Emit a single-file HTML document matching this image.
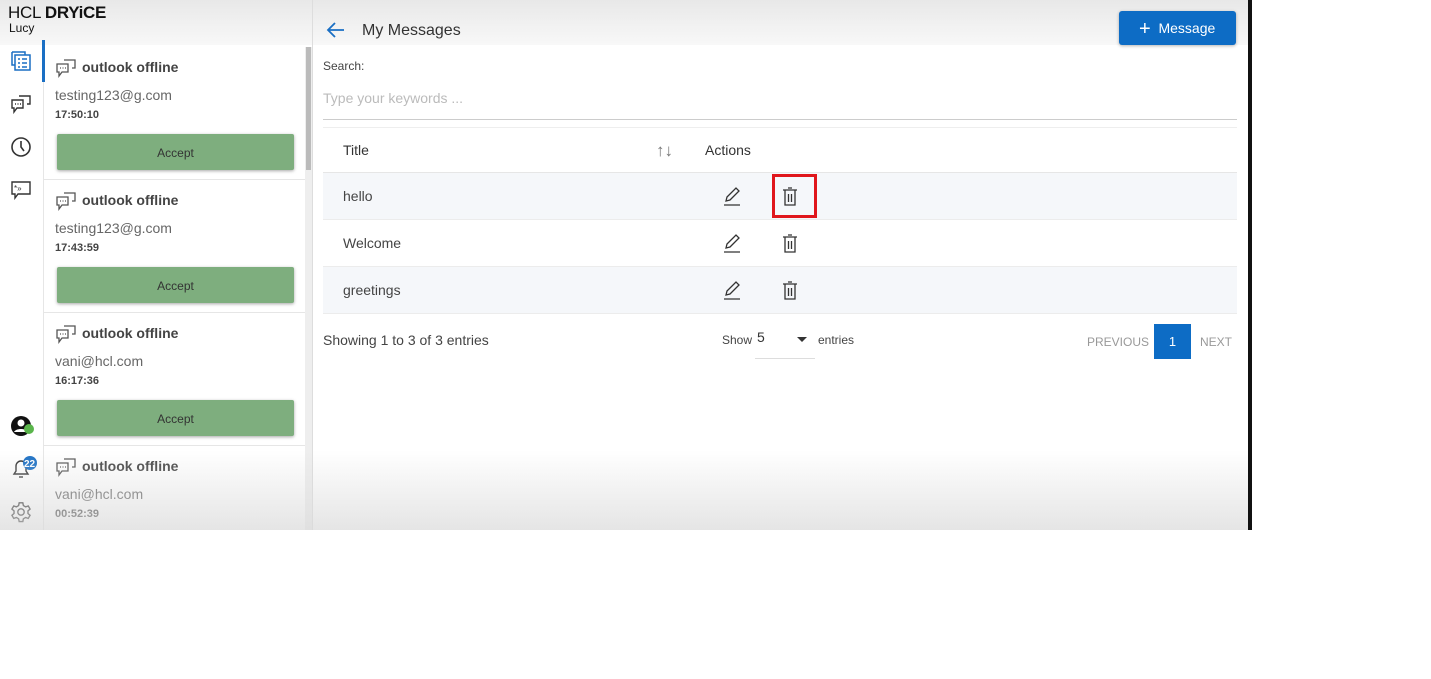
<!DOCTYPE html>
<html><head><style>
*{margin:0;padding:0;box-sizing:border-box}
body{width:1431px;height:679px;background:#fff;font-family:"Liberation Sans",sans-serif;position:relative;overflow:hidden;color:#333}
.abs{position:absolute}
.screen{position:absolute;left:0;top:0;width:1248px;height:530px;background:#fff;overflow:hidden}
.vline{position:absolute;left:1248px;top:0;width:4px;height:530px;background:#111}
.card{position:absolute;left:44px;width:261px;height:133px;border-bottom:1px solid #e6e6e6}
.card .t{position:absolute;left:38px;top:12px;font-size:14px;font-weight:bold;color:#444}
.card .e{position:absolute;left:11px;top:40px;font-size:14px;color:#666}
.card .tm{position:absolute;left:11px;top:62px;font-size:11px;font-weight:bold;color:#444}
.card .b{position:absolute;left:13px;top:87px;width:237px;height:36px;background:#7eae7e;box-shadow:0 1px 3px rgba(0,0,0,.35);font-size:12px;text-align:center;line-height:38px;color:#333;border-radius:2px}
.card svg{position:absolute;left:11px;top:10px}
.row{position:absolute;left:323px;width:914px;height:47px;border-bottom:1px solid #ececec;font-size:14px;color:#444}
.row span{position:absolute;left:20px;top:15px}
.row .ed{position:absolute;left:398px;top:12px}
.row .dl{position:absolute;left:456px;top:12px}
</style></head><body>
<div class="screen">
 <div class="abs" style="left:0;top:0;width:1248px;height:45px;background:linear-gradient(#e8e8e8,#f8f8f8)"></div>
 <div class="abs" style="left:8px;top:3px;font-size:17px;color:#111;letter-spacing:-0.3px">HCL <b>DRYiCE</b></div>
 <div class="abs" style="left:9px;top:21px;font-size:12px;color:#111">Lucy</div>
 <div class="abs" style="left:43px;top:40px;width:1px;height:490px;background:#e6e6e6"></div>
 <div class="abs" style="left:42px;top:40px;width:3px;height:42px;background:#1a6fc4"></div>
 <svg class="abs" style="left:10px;top:50px" width="22" height="22" viewBox="0 0 22 22" fill="none" stroke="#1a6fc4" stroke-width="1.5"><rect x="5" y="5" width="15" height="15"/><path d="M2 2h13v3M2 2v13h3M8 9h2M12 9h5M8 13h2M12 13h5M8 17h2M12 17h5"/></svg>
 <svg class="abs" style="left:10px;top:93px" width="22" height="22" viewBox="0 0 22 22" fill="none" stroke="#333" stroke-width="1.4"><path d="M2 7h11v8H7l-3 4v-4H2z"/><path d="M9 3h11v8h-3"/><path d="M5 11h1M7.5 11h1M10 11h1"/></svg>
 <svg class="abs" style="left:10px;top:136px" width="22" height="22" viewBox="0 0 22 22" fill="none" stroke="#333" stroke-width="1.6"><circle cx="11" cy="11" r="9"/><path d="M11 5v6l3 4"/></svg>
 <svg class="abs" style="left:10px;top:179px" width="22" height="22" viewBox="0 0 22 22" fill="none" stroke="#333" stroke-width="1.4"><path d="M2 3h18v12H8l-3 4v-4H2z"/><text x="4" y="12" font-size="8" fill="#333" stroke="none">*»</text></svg>
 <svg class="abs" style="left:10px;top:415px" width="26" height="22" viewBox="0 0 26 22"><circle cx="11" cy="11" r="10" fill="#111"/><circle cx="11" cy="8" r="3.5" fill="#fff"/><path d="M4 17c2-4 12-4 14 0" fill="#fff"/><circle cx="19" cy="14" r="5" fill="#5ab54b"/></svg>
 <svg class="abs" style="left:10px;top:455px" width="28" height="26" viewBox="0 0 28 26" fill="none" stroke="#333" stroke-width="1.4"><path d="M4 19h14l-2-3v-5a5 5 0 0 0-10 0v5z"/><path d="M9 22h4"/><circle cx="20" cy="8" r="7" fill="#1a6fc4" stroke="none"/><text x="14" y="12" font-size="10" font-weight="bold" fill="#fff" stroke="none" font-family="Liberation Sans">22</text></svg>
 <svg class="abs" style="left:10px;top:501px" width="22" height="22" viewBox="0 0 24 24" fill="none" stroke="#333" stroke-width="1.5"><circle cx="12" cy="12" r="3.5"/><path d="M10 2h4l.6 3 2.4 1.4 2.9-1 2 3.4-2.3 2v2.8l2.3 2-2 3.4-2.9-1-2.4 1.4-.6 3h-4l-.6-3-2.4-1.4-2.9 1-2-3.4 2.3-2v-2.8l-2.3-2 2-3.4 2.9 1L9.4 5z"/></svg>
 <div class="card" style="top:47px"><svg width="22" height="22" viewBox="0 0 22 22" fill="none" stroke="#555" stroke-width="1.3"><path d="M2 7h11v8H7l-3 4v-4H2z"/><path d="M9 3h11v8h-3"/><path d="M5 11h1M7.5 11h1M10 11h1"/></svg><div class="t">outlook offline</div><div class="e">testing123@g.com</div><div class="tm">17:50:10</div><div class="b">Accept</div></div>
 <div class="card" style="top:180px"><svg width="22" height="22" viewBox="0 0 22 22" fill="none" stroke="#555" stroke-width="1.3"><path d="M2 7h11v8H7l-3 4v-4H2z"/><path d="M9 3h11v8h-3"/><path d="M5 11h1M7.5 11h1M10 11h1"/></svg><div class="t">outlook offline</div><div class="e">testing123@g.com</div><div class="tm">17:43:59</div><div class="b">Accept</div></div>
 <div class="card" style="top:313px"><svg width="22" height="22" viewBox="0 0 22 22" fill="none" stroke="#555" stroke-width="1.3"><path d="M2 7h11v8H7l-3 4v-4H2z"/><path d="M9 3h11v8h-3"/><path d="M5 11h1M7.5 11h1M10 11h1"/></svg><div class="t">outlook offline</div><div class="e">vani@hcl.com</div><div class="tm">16:17:36</div><div class="b">Accept</div></div>
 <div class="card" style="top:446px;border:none"><svg width="22" height="22" viewBox="0 0 22 22" fill="none" stroke="#555" stroke-width="1.3"><path d="M2 7h11v8H7l-3 4v-4H2z"/><path d="M9 3h11v8h-3"/><path d="M5 11h1M7.5 11h1M10 11h1"/></svg><div class="t">outlook offline</div><div class="e">vani@hcl.com</div><div class="tm">00:52:39</div></div>
 <div class="abs" style="left:305px;top:47px;width:7px;height:483px;background:#eee"></div>
 <div class="abs" style="left:306px;top:47px;width:5px;height:123px;background:#bbb"></div>
 <div class="abs" style="left:312px;top:0;width:1px;height:530px;background:#ddd"></div>
 <svg class="abs" style="left:326px;top:21px" width="20" height="18" viewBox="0 0 20 18" fill="none" stroke="#1a6fc4" stroke-width="1.8"><path d="M18 9H3M9 2L2 9l7 7"/></svg>
 <div class="abs" style="left:362px;top:22px;font-size:16px;color:#333">My Messages</div>
 <div class="abs" style="left:1119px;top:11px;width:117px;height:34px;background:#0d6cc5;border-radius:3px;box-shadow:0 1px 3px rgba(0,0,0,.3);color:#fff;font-size:14px;line-height:34px;padding-left:20px"><span style="font-size:20px;vertical-align:-2px">+</span>&nbsp; Message</div>
 <div class="abs" style="left:323px;top:59px;font-size:12px;color:#444">Search:</div>
 <div class="abs" style="left:323px;top:90px;font-size:14px;color:#bbb">Type your keywords ...</div>
 <div class="abs" style="left:323px;top:119px;width:914px;height:1px;background:#ccc"></div>
 <div class="abs" style="left:323px;top:127px;width:914px;height:1px;background:#eee"></div>
 <div class="abs" style="left:343px;top:142px;font-size:14px;color:#333">Title</div>
 <div class="abs" style="left:656px;top:141px;font-size:17px;color:#777">↑↓</div>
 <div class="abs" style="left:705px;top:142px;font-size:14px;color:#333">Actions</div>
 <div class="abs" style="left:323px;top:172px;width:914px;height:1px;background:#e6e6e6"></div>
 <div class="row" style="top:173px;background:#f5f7fa"><span>hello</span>
  <svg class="ed" width="22" height="22" viewBox="0 0 22 22" fill="none" stroke="#333" stroke-width="1.3"><path d="M3 20h16M5 16l1-4 9-9 3 3-9 9z"/></svg>
  <svg class="dl" width="22" height="22" viewBox="0 0 22 22" fill="none" stroke="#333" stroke-width="1.3"><path d="M4 5h14M9 3h4M6 5v15h10V5M9.5 9v8M12.5 9v8"/></svg>
  <div class="abs" style="left:449px;top:1px;width:45px;height:44px;border:3px solid #e0161c"></div></div>
 <div class="row" style="top:220px"><span>Welcome</span>
  <svg class="ed" width="22" height="22" viewBox="0 0 22 22" fill="none" stroke="#333" stroke-width="1.3"><path d="M3 20h16M5 16l1-4 9-9 3 3-9 9z"/></svg>
  <svg class="dl" width="22" height="22" viewBox="0 0 22 22" fill="none" stroke="#333" stroke-width="1.3"><path d="M4 5h14M9 3h4M6 5v15h10V5M9.5 9v8M12.5 9v8"/></svg></div>
 <div class="row" style="top:267px;background:#f5f7fa"><span>greetings</span>
  <svg class="ed" width="22" height="22" viewBox="0 0 22 22" fill="none" stroke="#333" stroke-width="1.3"><path d="M3 20h16M5 16l1-4 9-9 3 3-9 9z"/></svg>
  <svg class="dl" width="22" height="22" viewBox="0 0 22 22" fill="none" stroke="#333" stroke-width="1.3"><path d="M4 5h14M9 3h4M6 5v15h10V5M9.5 9v8M12.5 9v8"/></svg></div>
 <div class="abs" style="left:323px;top:332px;font-size:14px;color:#444">Showing 1 to 3 of 3 entries</div>
 <div class="abs" style="left:722px;top:333px;font-size:12px;color:#444">Show</div>
 <div class="abs" style="left:757px;top:329px;font-size:14px;color:#333">5</div>
 <div class="abs" style="left:797px;top:337px;width:0;height:0;border-left:5px solid transparent;border-right:5px solid transparent;border-top:5px solid #333"></div>
 <div class="abs" style="left:755px;top:358px;width:60px;height:1px;background:#ddd"></div>
 <div class="abs" style="left:818px;top:333px;font-size:12px;color:#444">entries</div>
 <div class="abs" style="left:1087px;top:335px;font-size:12px;color:#999">PREVIOUS</div>
 <div class="abs" style="left:1154px;top:324px;width:37px;height:35px;background:#0d6cc5;color:#fff;font-size:13px;text-align:center;line-height:35px">1</div>
 <div class="abs" style="left:1200px;top:335px;font-size:12px;color:#999">NEXT</div>
 <div class="abs" style="left:0;top:450px;width:1248px;height:80px;background:linear-gradient(rgba(225,225,225,0),rgba(218,218,218,.7))"></div>
</div>
<div class="vline"></div>
</body></html>
